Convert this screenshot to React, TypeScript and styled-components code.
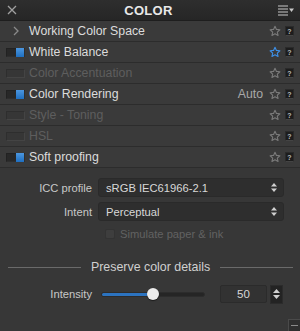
import React from 'react';
import styled, { createGlobalStyle } from 'styled-components';

const Global = createGlobalStyle`
  html, body {
    margin: 0;
    padding: 0;
    background: #363636;
  }
  * {
    box-sizing: border-box;
  }
`;

const Panel = styled.div`
  width: 300px;
  height: 331px;
  background: #373737;
  font-family: 'Liberation Sans', Arial, sans-serif;
  color: #d8d8d8;
  display: flex;
  flex-direction: column;
  position: relative;
  overflow: hidden;
`;

const Header = styled.div`
  height: 21px;
  background: linear-gradient(#2e2e2e, #262626);
  display: flex;
  align-items: center;
  justify-content: space-between;
  padding: 0 6px 0 5px;
  border-bottom: 1px solid #1e1e1e;
`;

const Title = styled.div`
  font-size: 13px;
  font-weight: bold;
  color: #e8e8e8;
  letter-spacing: 0.3px;
`;

const IconBox = styled.div`
  width: 14px;
  height: 14px;
  display: flex;
  align-items: center;
  justify-content: center;
`;

const Row = styled.div`
  height: 21px;
  display: flex;
  align-items: center;
  background: #3a3a3a;
  border-bottom: 1px solid #2c2c2c;
  padding: 0 6px 0 6px;
`;

const Toggle = styled.div<{ $on?: boolean }>`
  width: 19px;
  height: 9px;
  border: 1px solid ${p => (p.$on ? '#222' : '#2e2e2e')};
  border-bottom-color: ${p => (p.$on ? '#2e2e2e' : '#444')};
  border-right-color: ${p => (p.$on ? '#2e2e2e' : '#444')};
  background: ${p => (p.$on ? '#282828' : '#363636')};
  display: flex;
  justify-content: flex-end;
  align-items: center;
  margin-right: 4px;
  flex-shrink: 0;
  &::after {
    content: '';
    display: ${p => (p.$on ? 'block' : 'none')};
    width: 8px;
    height: 9px;
    background: linear-gradient(#4c97e0, #1f6fc0);
  }
`;

const Chevron = styled.div`
  width: 19px;
  margin-right: 4px;
  display: flex;
  justify-content: center;
`;

const Label = styled.div<{ $dim?: boolean }>`
  flex: 1;
  font-size: 12.3px;
  color: ${p => (p.$dim ? '#5e5e5e' : '#dcdcdc')};
  white-space: nowrap;
`;

const Value = styled.div`
  font-size: 12.3px;
  color: #a8a8a8;
  margin-right: 6px;
`;

const Help = styled.div`
  width: 9px;
  height: 10px;
  margin-left: 4px;
  background: #1d1d1d;
  border: 1px solid #2a2a2a;
  border-bottom-color: #444;
  color: #bbb;
  font-size: 7px;
  font-weight: bold;
  display: flex;
  align-items: center;
  justify-content: center;
  line-height: 1;
`;

const Body = styled.div`
  flex: 1;
  background: #373737;
  padding: 10px 0 0;
  display: flex;
  flex-direction: column;
`;

const FieldRow = styled.div`
  display: flex;
  align-items: center;
  height: 19px;
  margin-bottom: 5px;
`;

const FieldLabel = styled.div`
  width: 92px;
  text-align: right;
  font-size: 11.2px;
  color: #c8c8c8;
  flex-shrink: 0;
`;

const Select = styled.div`
  margin-left: 6px;
  width: 186px;
  height: 19px;
  background: #2e2e2e;
  border: 1px solid #2a2a2a;
  border-radius: 3px;
  display: flex;
  align-items: center;
  justify-content: space-between;
  padding: 0 6px 0 7px;
  font-size: 11.2px;
  color: #d8d8d8;
`;

const CheckRow = styled.div`
  display: flex;
  align-items: center;
  padding-left: 105px;
  height: 14px;
  margin-top: 1px;
`;

const CheckBox = styled.div`
  width: 10px;
  height: 10px;
  border: 1px solid #333;
  background: #3e3e3e;
  border-radius: 2px;
  margin-right: 5px;
`;

const CheckText = styled.div`
  font-size: 11.2px;
  color: #626262;
`;

const SectionTitle = styled.div`
  display: flex;
  align-items: center;
  gap: 10px;
  padding: 0 7px 0 8px;
  margin-top: 19px;
  font-size: 12.4px;
  color: #d0d0d0;
  &::before,
  &::after {
    content: '';
    flex: 1;
    height: 1px;
    background: #6a6a6a;
  }
`;

const SliderRow = styled.div`
  display: flex;
  align-items: center;
  margin-top: 10px;
  height: 20px;
`;

const Track = styled.div`
  margin-left: 9px;
  width: 104px;
  height: 5px;
  background: #252525;
  border: 1px solid #2c2c2c;
  border-radius: 3px;
  position: relative;
`;

const Fill = styled.div`
  height: 100%;
  background: #2c73bf;
  border-radius: 3px;
`;

const Thumb = styled.div`
  position: absolute;
  top: 50%;
  width: 12px;
  height: 12px;
  border-radius: 50%;
  background: #ececec;
  transform: translate(-50%, -50%);
  box-shadow: 0 1px 1px rgba(0, 0, 0, 0.5);
`;

const NumberBox = styled.div`
  margin-left: 15px;
  width: 47px;
  height: 18px;
  background: #323232;
  border: 1px solid #2b2b2b;
  border-radius: 2px;
  display: flex;
  align-items: center;
  justify-content: center;
  font-size: 11.5px;
  color: #d8d8d8;
`;

const Stepper = styled.div`
  margin-left: 3px;
  width: 13px;
  height: 19px;
  background: #232323;
  border: 1px solid #2b2b2b;
  display: flex;
  flex-direction: column;
  align-items: center;
  justify-content: space-around;
  padding: 2px 0;
`;

const Corner = styled.div`
  position: absolute;
  right: 0;
  bottom: 0;
  width: 12px;
  height: 12px;
  background: #2f2f2f;
  border-top: 1px solid #4a4a4a;
  border-left: 1px solid #4a4a4a;
  display: flex;
  align-items: center;
  justify-content: center;
  &::after {
    content: '';
    width: 7px;
    height: 1px;
    background: #8a8a8a;
  }
`;

const Star = ({ active }: { active?: boolean }) => (
  <svg width="12" height="12" viewBox="0 0 24 24">
    <path
      d="M12 2.5l2.9 6.3 6.9.7-5.2 4.6 1.5 6.8L12 17.4l-6.1 3.5 1.5-6.8-5.2-4.6 6.9-.7z"
      fill="none"
      stroke={active ? '#3d8fe6' : '#7a7a7a'}
      strokeWidth="2.2"
      strokeLinejoin="round"
    />
  </svg>
);

const UpDown = () => (
  <svg width="6" height="9" viewBox="0 0 6 9">
    <path d="M3 0L6 3.5H0z" fill="#cfcfcf" />
    <path d="M3 9L6 5.5H0z" fill="#cfcfcf" />
  </svg>
);

type Item = { label: string; kind: 'chevron' | 'on' | 'off'; dim?: boolean; value?: string; starred?: boolean };

const items: Item[] = [
  { label: 'Working Color Space', kind: 'chevron' },
  { label: 'White Balance', kind: 'on', starred: true },
  { label: 'Color Accentuation', kind: 'off', dim: true },
  { label: 'Color Rendering', kind: 'on', value: 'Auto' },
  { label: 'Style - Toning', kind: 'off', dim: true },
  { label: 'HSL', kind: 'off', dim: true },
  { label: 'Soft proofing', kind: 'on' },
];

const App = () => {
  const intensity = 50;
  return (
    <Panel>
      <Global />
      <Header>
        <IconBox>
          <svg width="10" height="10" viewBox="0 0 10 10">
            <path d="M1 1L9 9M9 1L1 9" stroke="#a0a0a0" strokeWidth="1.3" />
          </svg>
        </IconBox>
        <Title>COLOR</Title>
        <IconBox style={{ width: 16 }}>
          <svg width="16" height="11" viewBox="0 0 16 11">
            <path d="M0 1h10M0 4h10M0 7h10M0 10h10" stroke="#c8c8c8" strokeWidth="1.2" />
            <path d="M11 3.5h5L13.5 7z" fill="#c8c8c8" />
          </svg>
        </IconBox>
      </Header>
      {items.map(it => (
        <Row key={it.label}>
          {it.kind === 'chevron' ? (
            <Chevron>
              <svg width="6" height="10" viewBox="0 0 6 10">
                <path d="M1 1l4 4-4 4" fill="none" stroke="#8a8a8a" strokeWidth="1.3" />
              </svg>
            </Chevron>
          ) : (
            <Toggle $on={it.kind === 'on'} />
          )}
          <Label $dim={it.dim}>{it.label}</Label>
          {it.value && <Value>{it.value}</Value>}
          <Star active={it.starred} />
          <Help>?</Help>
        </Row>
      ))}
      <Body>
        <FieldRow>
          <FieldLabel>ICC profile</FieldLabel>
          <Select>
            <span>sRGB IEC61966-2.1</span>
            <UpDown />
          </Select>
        </FieldRow>
        <FieldRow>
          <FieldLabel>Intent</FieldLabel>
          <Select>
            <span>Perceptual</span>
            <UpDown />
          </Select>
        </FieldRow>
        <CheckRow>
          <CheckBox />
          <CheckText>Simulate paper &amp; ink</CheckText>
        </CheckRow>
        <SectionTitle>Preserve color details</SectionTitle>
        <SliderRow>
          <FieldLabel>Intensity</FieldLabel>
          <Track>
            <Fill style={{ width: `${intensity}%` }} />
            <Thumb style={{ left: `${intensity}%` }} />
          </Track>
          <NumberBox>{intensity}</NumberBox>
          <Stepper>
            <svg width="7" height="4" viewBox="0 0 7 4">
              <path d="M3.5 0L7 4H0z" fill="#cfcfcf" />
            </svg>
            <svg width="7" height="4" viewBox="0 0 7 4">
              <path d="M3.5 4L7 0H0z" fill="#cfcfcf" />
            </svg>
          </Stepper>
        </SliderRow>
      </Body>
      <Corner />
    </Panel>
  );
};

export default App;
